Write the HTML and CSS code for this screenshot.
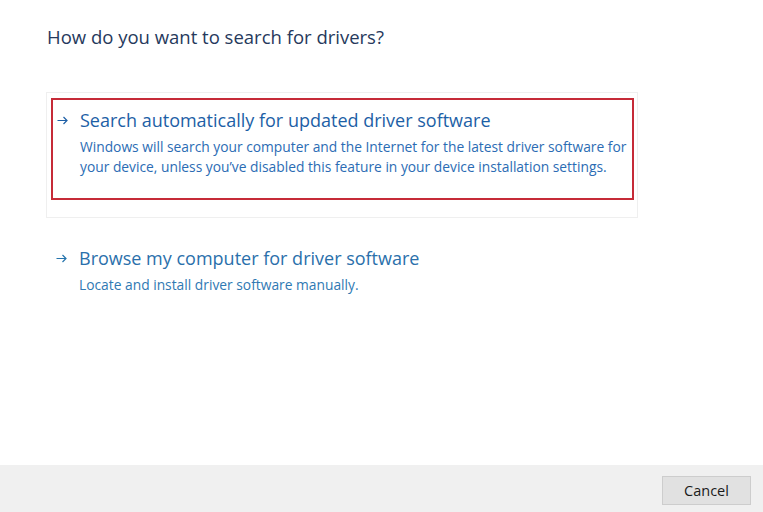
FILE: index.html
```html
<!DOCTYPE html>
<html lang="en">
<head>
<meta charset="utf-8">
<title>Update Drivers</title>
<link rel="stylesheet" href="styles.css">
</head>
<body>
<div class="dialog">
  <main class="content">
    <h1 class="instruction">How do you want to search for drivers?</h1>
    <div class="option option-hover">
      <div class="highlight">
        <a class="cmd" href="#">
          <svg class="arrow" width="11" height="9" viewBox="0 0 11 9"><path d="M0.5 4.5H10M6.5 1L10 4.5L6.5 8" fill="none" stroke="currentColor" stroke-width="1.2"/></svg>
          <span class="cmd-text">
            <span class="cmd-title">Search automatically for updated driver software</span>
            <span class="cmd-desc">Windows will search your computer and the Internet for the latest driver software for your device, unless you’ve disabled this feature in your device installation settings.</span>
          </span>
        </a>
      </div>
    </div>
    <div class="option option-plain">
      <a class="cmd cmd-second" href="#">
        <svg class="arrow" width="11" height="9" viewBox="0 0 11 9"><path d="M0.5 4.5H10M6.5 1L10 4.5L6.5 8" fill="none" stroke="currentColor" stroke-width="1.2"/></svg>
        <span class="cmd-text">
          <span class="cmd-title">Browse my computer for driver software</span>
          <span class="cmd-desc">Locate and install driver software manually.</span>
        </span>
      </a>
    </div>
  </main>
  <footer class="footer">
    <button class="btn" type="button">Cancel</button>
  </footer>
</div>
</body>
</html>
```
FILE: styles.css
```css
* { box-sizing: border-box; }
html, body { margin: 0; padding: 0; }
body {
  background: #ffffff;
  font-family: "Open Sans", "Noto Sans", "Liberation Sans", sans-serif;
}
.dialog {
  width: 763px;
  height: 512px;
  display: flex;
  flex-direction: column;
}
.content {
  flex: 1;
  padding: 25px 0 0 46px;
}
.instruction {
  margin: 0 0 0 1px;
  font-size: 18.5px;
  line-height: 24px;
  font-weight: 400;
  color: #26395c;
}
.option {
  width: 592px;
}
.option-hover {
  margin-top: 43px;
  border: 1px solid #efefef;
  padding: 5px 3px 17px 4px;
}
.highlight {
  border: 2px solid #c62b38;
  padding: 8px 0 21px 0;
}
.cmd {
  display: flex;
  align-items: flex-start;
  text-decoration: none;
  color: #1d5fa6;
}
.arrow {
  flex: none;
  margin: 8px 12px 0 4px;
}
.cmd-text {
  display: flex;
  flex-direction: column;
}
.cmd-title {
  font-size: 18px;
  line-height: 24px;
  margin-bottom: 5px;
  color: #1d5fa6;
}
.cmd-desc {
  font-size: 13.8px;
  line-height: 20px;
  color: #2b6cb4;
}
.option-plain {
  padding: 28px 0 0 6px;
}
.cmd-second {
  color: #2574ad;
}
.cmd-second .cmd-title { color: #2a70ab; }
.cmd-second .cmd-desc { color: #3079b3; }
.footer {
  height: 47px;
  background: #f0f0f0;
  display: flex;
  justify-content: flex-end;
  align-items: flex-start;
  padding: 11px 12px 0 0;
}
.btn {
  width: 89px;
  height: 29px;
  background: #e1e1e1;
  border: 1px solid #cdcdcd;
  font-family: "Open Sans", "Noto Sans", sans-serif;
  font-size: 14.5px;
  color: #1a1a1a;
  padding: 0;
}
```
